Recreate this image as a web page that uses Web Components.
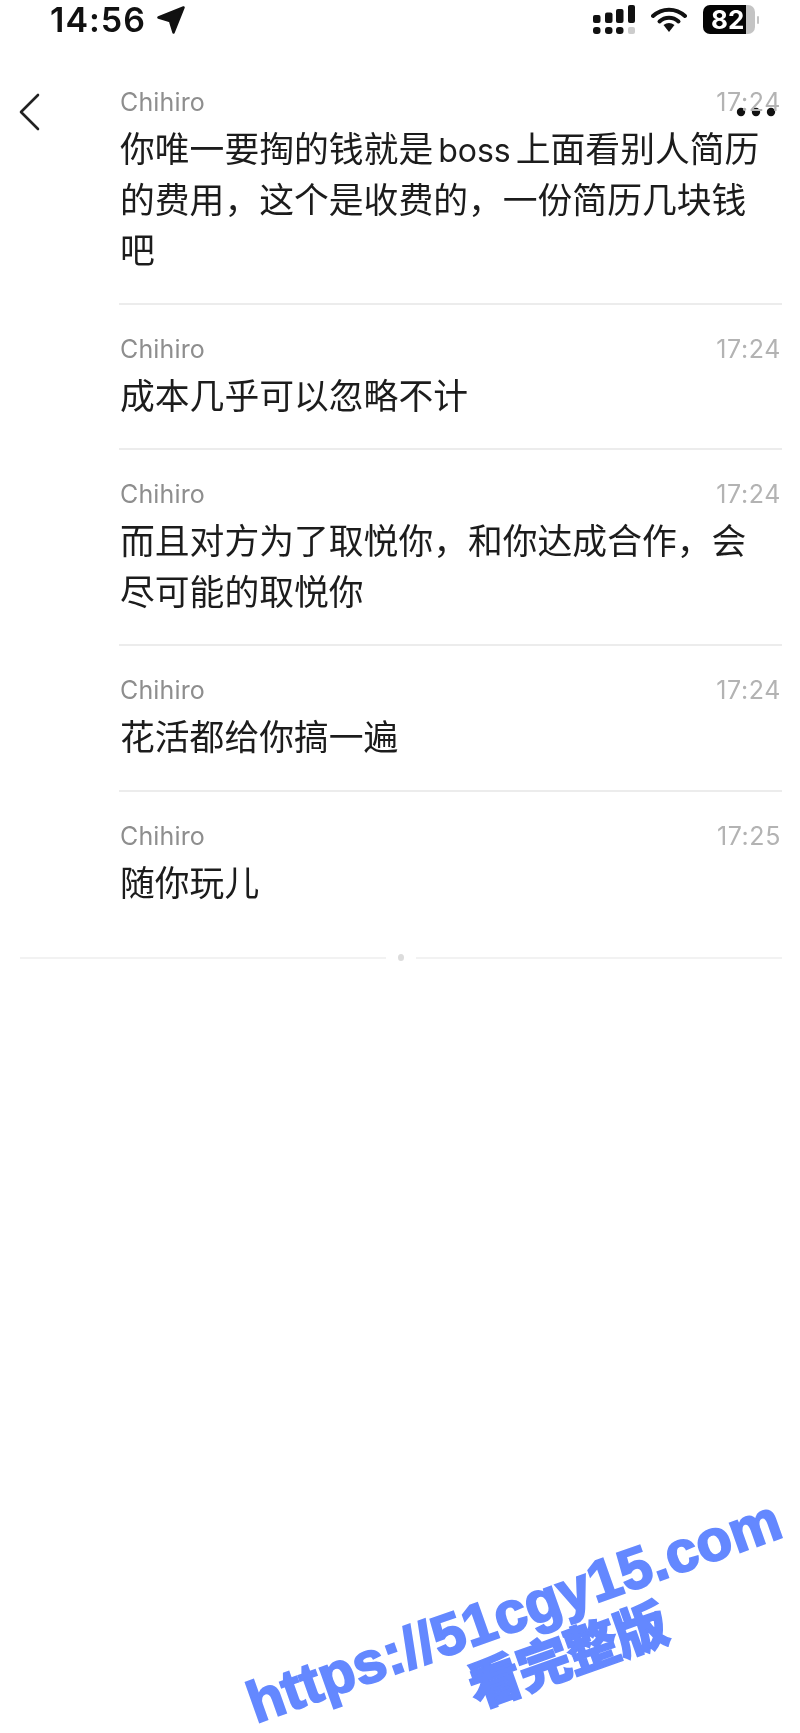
<!DOCTYPE html>
<html>
<head>
<meta charset="utf-8">
<style>
html, body { margin: 0; padding: 0; background: #fff; }
body { width: 800px; height: 1733px; overflow: hidden; position: relative; font-family: Inter, "Liberation Sans", "Noto Sans CJK SC", sans-serif; }
</style>
</head>
<body>
<status-bar></status-bar>
<nav-overlay></nav-overlay>
<chat-list>
  <chat-item name="Chihiro" time="17:24">你唯一要掏的钱就是<span style="font-size:32px;line-height:0;margin:0 5px">boss</span>上面看别人简历<br>的费用，这个是收费的，一份简历几块钱<br>吧</chat-item>
  <chat-item name="Chihiro" time="17:24">成本几乎可以忽略不计</chat-item>
  <chat-item name="Chihiro" time="17:24">而且对方为了取悦你，和你达成合作，会<br>尽可能的取悦你</chat-item>
  <chat-item name="Chihiro" time="17:24">花活都给你搞一遍</chat-item>
  <chat-item name="Chihiro" time="17:25" last>随你玩儿</chat-item>
</chat-list>
<end-divider></end-divider>
<water-mark></water-mark>

<script>
class StatusBar extends HTMLElement {
    constructor() {
        super();
        this.attachShadow({ mode: 'open' }).innerHTML = `
        <style>
        :host { display: flex; height: 39px; padding: 0 41px 0 50px; justify-content: space-between; align-items: center; color: #111; filter: blur(.4px); }
        .left { display: flex; align-items: center; gap: 11px; font: 600 34px Inter, "Liberation Sans", sans-serif; letter-spacing: 1px; }
        .right { display: flex; align-items: center; gap: 16px; }
        .bat { width: 52px; height: 29px; border-radius: 7px; background: linear-gradient(90deg, #050505 0 83%, #c4c4c4 83%); color: #fff; font: 700 26px/29px Inter, sans-serif; padding-left: 8px; box-sizing: border-box; }
        .batwrap { display: flex; align-items: center; gap: 2px; }
        .nub { width: 2px; height: 8px; background: #c4c4c4; border-radius: 1px; }
        </style>
        <div class="left"><span>14:56</span>
          <svg width="28" height="28" viewBox="0 0 28 28"><path d="M26.5 1.5 L1.5 11.5 L13 15 L16.5 26.5 Z" fill="#111" stroke="#111" stroke-width="2.5" stroke-linejoin="round"/></svg>
        </div>
        <div class="right">
          <svg width="42" height="29" viewBox="0 0 42 29" fill="#111">
            <rect x="0" y="10" width="7.5" height="8" rx="2"/><rect x="12" y="7.5" width="7.5" height="10.5" rx="2"/><rect x="23" y="4" width="7.5" height="14" rx="2"/><rect x="35" y="0" width="7" height="18" rx="2"/>
            <rect x="0" y="22" width="7.5" height="7" rx="3"/><rect x="12" y="22" width="7.5" height="7" rx="3"/><rect x="23" y="22" width="7.5" height="7" rx="3"/><rect x="35" y="22" width="7" height="7" rx="2" fill="#ccc"/>
          </svg>
          <svg width="36" height="25" viewBox="0 0 36 25">
            <path d="M2 9 C11 0.5 25 0.5 34 9" fill="none" stroke="#111" stroke-width="4" stroke-linecap="round"/>
            <path d="M8.5 14.5 C14 9.5 22 9.5 27.5 14.5" fill="none" stroke="#111" stroke-width="4" stroke-linecap="round"/>
            <path d="M12.5 18 Q18 14 23.5 18 L18 25 Z" fill="#111"/>
          </svg>
          <div class="batwrap"><div class="bat">82</div><div class="nub"></div></div>
        </div>`;
    }
}

class NavOverlay extends HTMLElement {
    constructor() {
        super();
        this.attachShadow({ mode: 'open' }).innerHTML = `
        <style>
        :host { display: block; position: absolute; left: 0; top: 90px; width: 800px; height: 40px; filter: blur(.3px); }
        svg { position: absolute; }
        .back { left: 18px; top: 2px; }
        .more { left: 736px; top: 16.5px; }
        </style>
        <svg class="back" width="24" height="40" viewBox="0 0 24 40"><path d="M20 3 L3 20 L20 37" fill="none" stroke="#222" stroke-width="2.6" stroke-linecap="round" stroke-linejoin="round"/></svg>
        <svg class="more" width="40" height="10" viewBox="0 0 40 10" fill="#111"><circle cx="5" cy="5" r="4.2"/><circle cx="20" cy="5" r="4.2"/><circle cx="35" cy="5" r="4.2"/></svg>`;
    }
}

class ChatList extends HTMLElement {
    constructor() {
        super();
        this.attachShadow({ mode: 'open' }).innerHTML = `
        <style>
        :host { display: block; padding: 43px 18px 0 119px; }
        </style>
        <slot></slot>`;
    }
}

class ChatItem extends HTMLElement {
    constructor() {
        super();
        const root = this.attachShadow({ mode: 'open' });
        root.innerHTML = `
        <style>
        :host { display: block; padding: 0 0 27px; border-bottom: 2px solid #ececec; margin-bottom: 24px; }
        :host([last]) { border-bottom: none; margin-bottom: 0; }
        .head { display: flex; justify-content: space-between; font: 400 25px/40px Inter, "Liberation Sans", sans-serif; color: #8e8e8e; padding-left: 1px; letter-spacing: .15px; filter: blur(.3px); }
        .time { color: #b3b3b3; letter-spacing: .6px; margin-right: 1px; }
        .body { font: 400 34.8px/50.5px Inter, "Noto Sans CJK SC", sans-serif; color: #1c1c1c; padding-left: 1px; padding-top: 2px; white-space: nowrap; filter: blur(.3px); }
        </style>
        <div class="head"><span class="name"></span><span class="time"></span></div>
        <div class="body"><slot></slot></div>`;
        root.querySelector('.name').textContent = this.getAttribute('name');
        root.querySelector('.time').textContent = this.getAttribute('time');
    }
}

class EndDivider extends HTMLElement {
    constructor() {
        super();
        this.attachShadow({ mode: 'open' }).innerHTML = `
        <style>
        :host { display: flex; align-items: center; gap: 12px; margin: 19px 18px 0 20px; }
        .line { flex: 1; height: 2px; background: #f2f2f2; }
        .dot { width: 6px; height: 7px; border-radius: 50%; background: #dcdcdc; }
        </style>
        <div class="line"></div><div class="dot"></div><div class="line"></div>`;
    }
}

class WaterMark extends HTMLElement {
    constructor() {
        super();
        this.attachShadow({ mode: 'open' }).innerHTML = `
        <style>
        :host { display: block; position: absolute; left: 220px; top: 1480px; width: 580px; height: 253px; color: #6488ff; }
        div { position: absolute; white-space: nowrap; transform: rotate(-19.5deg); transform-origin: left bottom; -webkit-text-stroke: 2px #6488ff; }
        .url { left: 39px; top: 194px; font: 700 58px/1 "Liberation Sans", sans-serif; letter-spacing: .2px; }
        .cn { left: 258px; top: 179px; font: 900 53px/1 "Noto Sans CJK SC", sans-serif; letter-spacing: -1.5px; -webkit-text-stroke-width: 1.5px; }
        </style>
        <div class="url">https://51cgy15.com</div>
        <div class="cn">看完整版</div>`;
    }
}

customElements.define('status-bar', StatusBar);
customElements.define('nav-overlay', NavOverlay);
customElements.define('chat-list', ChatList);
customElements.define('chat-item', ChatItem);
customElements.define('end-divider', EndDivider);
customElements.define('water-mark', WaterMark);
</script>
</body>
</html>
